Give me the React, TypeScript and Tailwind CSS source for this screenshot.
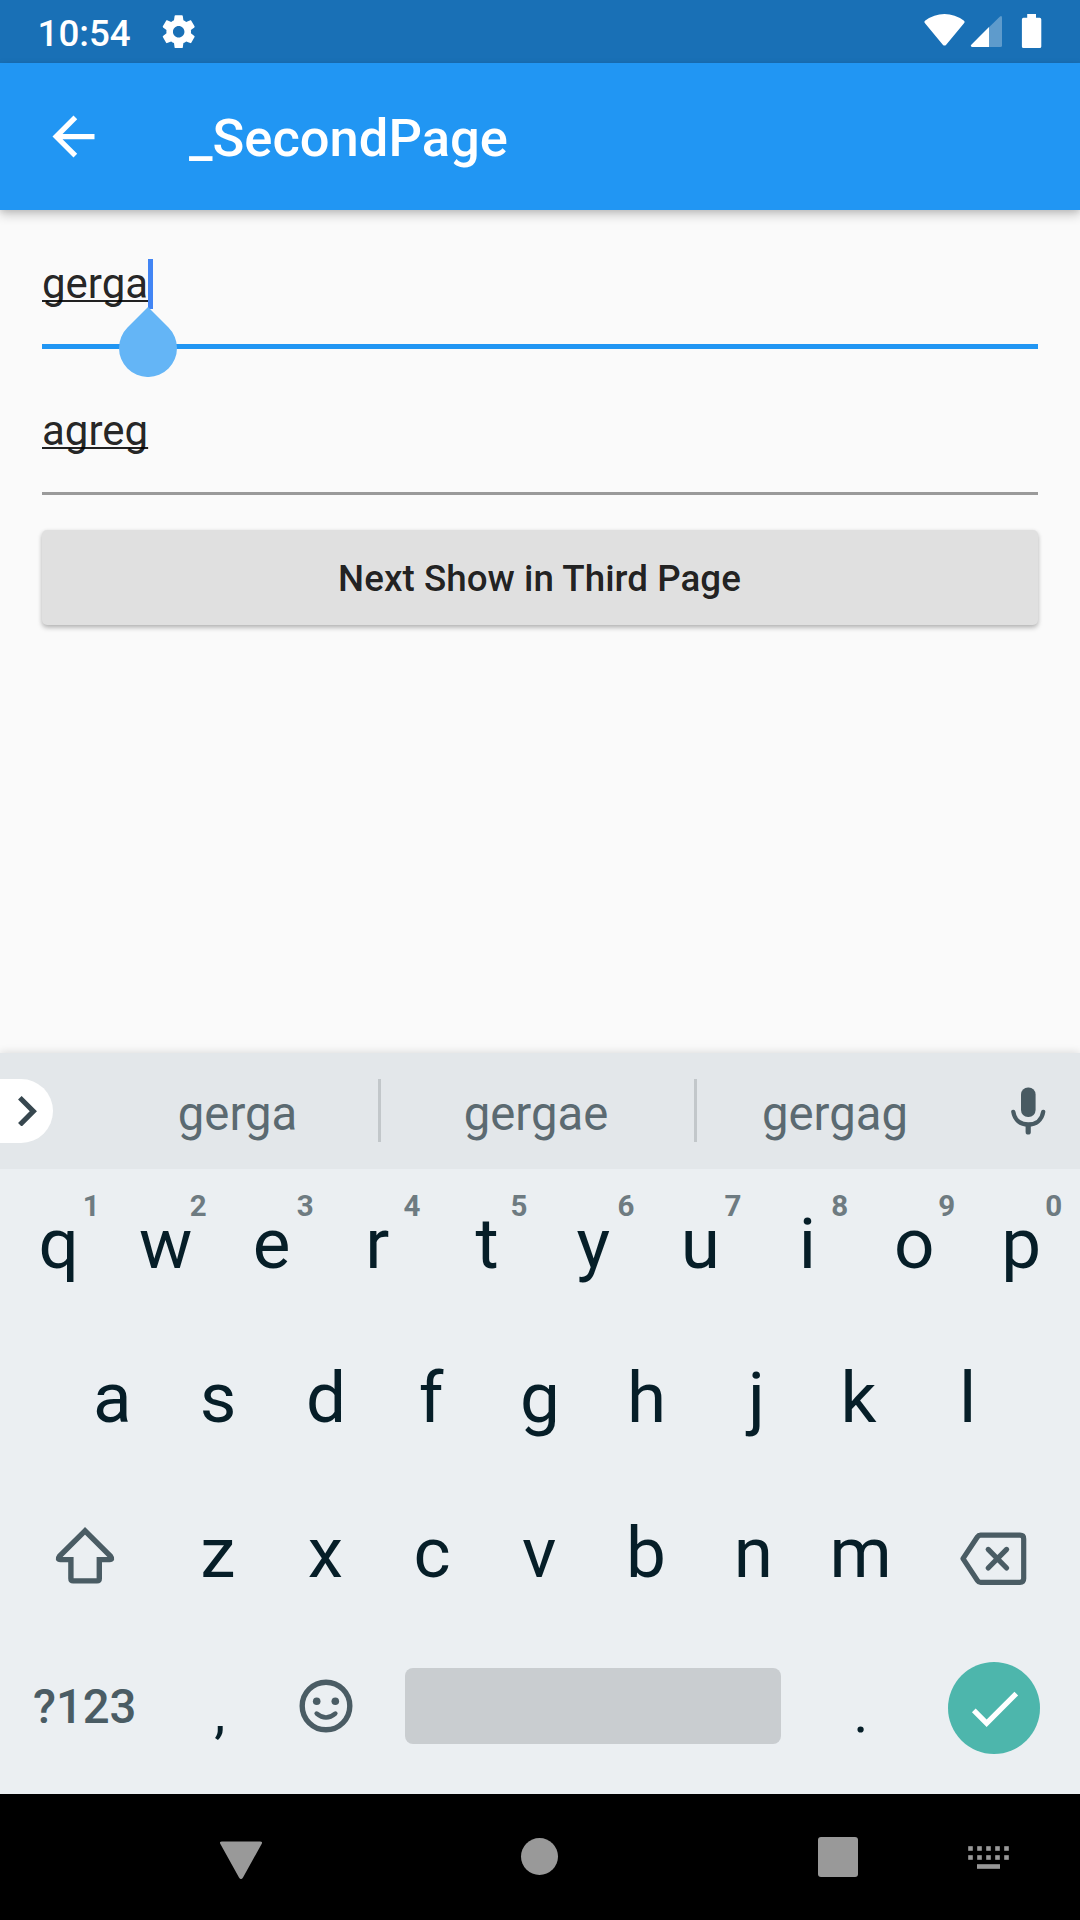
import React from "react";

const ROW_1 = ["q", "w", "e", "r", "t", "y", "u", "i", "o", "p"];
const HINTS = ["1", "2", "3", "4", "5", "6", "7", "8", "9", "0"];
const ROW_2 = ["a", "s", "d", "f", "g", "h", "j", "k", "l"];
const ROW_3 = ["z", "x", "c", "v", "b", "n", "m"];

// Optical centring for glyphs with uneven side bearings.
const OPTICAL: Record<string, string> = {
  e: "pr-[2px]",
  r: "pr-[4.5px]",
  t: "pl-[1.5px]",
  s: "pr-[2px]",
  f: "pr-[4px]",
  j: "pl-[5px]",
  k: "pr-[4.5px]",
  z: "pr-[2.5px]",
  x: "pr-[1.5px]",
  c: "pr-[2px]",
  v: "pr-[1.5px]",
  b: "pr-[2px]",
  h: "pr-[1px]",
  n: "pr-[1px]",
  ",": "pl-[1.5px]",
};

function Key({ label, hint }: { label: string; hint?: string }) {
  return (
    <div className="relative flex h-full w-[106.95px] items-center justify-center pb-[5px] text-[71px] leading-none text-[#061e28]">
      <span className={OPTICAL[label]}>{label}</span>
      {hint && (
        <span className="absolute top-[20px] right-[12.5px] text-[29.5px] leading-[35px] font-bold text-[#6e7b81]">
          {hint}
        </span>
      )}
    </div>
  );
}

function PunctuationKey({ label }: { label: string }) {
  return (
    <div className="flex w-[106.95px] items-center justify-center pt-[6px] text-[56px] leading-none text-[#061e28]">
      <span className={OPTICAL[label]}>{label}</span>
    </div>
  );
}

function StatusBar() {
  return (
    <div className="flex h-[63px] items-center bg-[#1970b6] pl-[37.5px] pr-[38px] text-white">
      <span className="pt-[5px] text-[36.75px] leading-none font-medium">10:54</span>
      <svg viewBox="0 0 24 24" className="ml-[28px] size-[39.4px]" fill="currentColor">
        <path d="M19.43 12.98c.04-.32.07-.64.07-.98s-.03-.66-.07-.98l2.11-1.65c.19-.15.24-.42.12-.64l-2-3.46c-.12-.22-.39-.3-.61-.22l-2.49 1c-.52-.4-1.08-.73-1.69-.98l-.38-2.65C14.46 2.18 14.25 2 14 2h-4c-.25 0-.46.18-.49.42l-.38 2.65c-.61.25-1.17.59-1.69.98l-2.49-1c-.23-.09-.49 0-.61.22l-2 3.46c-.13.22-.07.49.12.64l2.11 1.65c-.04.32-.07.65-.07.98s.03.66.07.98l-2.11 1.65c-.19.15-.24.42-.12.64l2 3.46c.12.22.39.3.61.22l2.49-1c.52.4 1.08.73 1.69.98l.38 2.65c.03.24.24.42.49.42h4c.25 0 .46-.18.49-.42l.38-2.65c.61-.25 1.17-.59 1.69-.98l2.49 1c.23.09.49 0 .61-.22l2-3.46c.12-.22.07-.49-.12-.64l-2.11-1.65zM12 15.5c-1.93 0-3.5-1.57-3.5-3.5s1.57-3.5 3.5-3.5 3.5 1.57 3.5 3.5-1.57 3.5-3.5 3.5z" />
      </svg>
      <svg viewBox="924 0 118 63" className="ml-auto h-[63px] w-[118px]" fill="currentColor">
        <path d="M925 23.2Q923.6 21.8 925.3 20.6Q934 14 944.5 14T963.7 20.6Q965.4 21.8 964 23.2L946.2 44.7Q944.5 46.4 942.8 44.7Z" />
        <path d="M1000 16.4Q1002 15.2 1002 17.6V45.5Q1002 47 1000.5 47H989V27.2Z" fillOpacity="0.3" />
        <path d="M989 27V47H972Q970 46.4 971.3 44.8Z" />
        <path d="M1027.2 14h8.8v3.8h3.7q1.6 0 1.6 1.6v27q0 1.5-1.6 1.5h-16.2q-1.6 0-1.6-1.5v-27q0-1.6 1.6-1.6h3.7z" />
      </svg>
    </div>
  );
}

function AppBar() {
  return (
    <div className="relative flex h-[147px] items-center bg-[#2196f3] pl-[42px] text-white shadow-[0_5px_10px_rgba(0,0,0,0.2),0_2px_5px_rgba(0,0,0,0.08)]">
      <svg viewBox="0 0 24 24" className="size-[63px]" fill="currentColor">
        <path d="M20 11H7.83l5.59-5.59L12 4l-8 8 8 8 1.41-1.41L7.83 13H20v-2z" />
      </svg>
      <h1 className="ml-[84px] pt-[4px] text-[52.5px] leading-none font-medium">_SecondPage</h1>
    </div>
  );
}

function Form() {
  return (
    <div className="flex h-[843px] flex-col bg-[#fafafa] px-[42px] text-[42px] text-black/87">
      <div className="relative flex h-[139px] items-end border-b-[5px] border-[#2196f3] pb-[35px]">
        <span className="pb-[1px] leading-[49px] underline decoration-[2px] underline-offset-[2px] [text-decoration-skip-ink:none]">
          gerga
        </span>
        <span className="h-[50px] w-[5px] bg-[#4285f4]" />
        <svg viewBox="0 0 58 70" className="absolute top-[97px] left-[77px] h-[70px] w-[58px]" fill="#64b5f6">
          <path d="M29 0L49.5 20.5A29 29 0 1 1 8.5 20.5Z" />
        </svg>
      </div>
      <div className="flex h-[146px] items-end border-b-[3px] border-[#9a9a9a] pb-[37px]">
        <span className="leading-[49px] underline decoration-[2px] underline-offset-[2px] [text-decoration-skip-ink:none]">
          agreg
        </span>
      </div>
      <button className="mt-[35px] h-[95px] rounded-[5px] bg-[#e0e0e0] pt-[4px] pr-[1px] text-[36.75px] leading-none font-medium tracking-[0.04px] shadow-[0_3px_5px_rgba(0,0,0,0.22),0_1px_4px_rgba(0,0,0,0.1)]">
        Next Show in Third Page
      </button>
    </div>
  );
}

function Suggestions() {
  return (
    <div className="flex h-[116px] bg-[#e3e7ea] pt-[26px] text-[47.25px] leading-[68px] text-[#5b6a71] shadow-[0_-1px_8px_rgba(0,0,0,0.12)]">
      <div className="flex h-[64px] w-[52.5px] items-center rounded-r-full bg-white">
        <svg viewBox="8.59 6 7.41 12" className="ml-[18px] h-[30.6px] w-[19px]" fill="#37474f">
          <path d="M10 6L8.59 7.41 13.17 12l-4.58 4.59L10 18l6-6z" />
        </svg>
      </div>
      <span className="ml-[44.5px] w-[281px] pt-[1px] text-center">gerga</span>
      <span className="h-[63px] w-[3px] bg-[#c2c7ca]" />
      <span className="w-[313px] pt-[1px] pr-[3px] text-center">gergae</span>
      <span className="h-[63px] w-[3px] bg-[#c2c7ca]" />
      <span className="w-[276px] pt-[1px] text-center">gergag</span>
      <svg viewBox="0 0 36 48" className="mt-[7.5px] ml-[37px] h-[48px] w-[36px]" fill="none" stroke="#485a62">
        <rect x="11" y="0.5" width="14.6" height="29.5" rx="7" fill="#485a62" stroke="none" />
        <path d="M3.3 24.8C4.5 33 10.5 37.5 18.2 37.5S32 33 33.2 24.8" strokeWidth="4.3" strokeLinecap="round" />
        <path d="M18.2 38.5V45" strokeWidth="5.2" strokeLinecap="round" />
      </svg>
    </div>
  );
}

function Keyboard() {
  return (
    <div className="relative flex h-[625px] flex-col bg-[#ebeff2] px-[5.25px]">
      <div className="flex h-[154px]">
        {ROW_1.map((k, i) => (
          <Key key={k} label={k} hint={HINTS[i]} />
        ))}
      </div>
      <div className="flex h-[154px] justify-center">
        {ROW_2.map((k) => (
          <Key key={k} label={k} />
        ))}
      </div>
      <div className="flex h-[155.5px]">
        <div className="flex w-[160.4px] items-center justify-center pt-[2px]">
          <svg viewBox="0 0 60 60" className="size-[60px]" fill="none" stroke="#4a5c64" strokeWidth="5.4">
            <path d="M30 4.9L4.4 30.4Q2 33.6 5.4 33.6H15.9V52.6Q15.9 54.9 18.2 54.9H42Q44.3 54.9 44.3 52.6V33.6H54.6Q58 33.6 55.6 30.4Z" />
          </svg>
        </div>
        {ROW_3.map((k) => (
          <Key key={k} label={k} />
        ))}
        <div className="flex w-[160.4px] items-center justify-center pt-[7px]">
          <svg viewBox="0 0 72 57" className="h-[57px] w-[72px]" fill="none" stroke="#4a5c64" strokeWidth="5.2" strokeLinejoin="round" strokeLinecap="round">
            <path d="M5 28.6L19.5 6.8Q20.5 5.2 22.5 5.2H62Q65.7 5.2 65.7 8.9V48.6Q65.7 52.3 62 52.3H22.5Q20.5 52.3 19.5 50.7Z" />
            <path d="M30.2 19.4L48.6 38M48.6 19.4L30.2 38" />
          </svg>
        </div>
      </div>
      <div className="flex h-[154.5px]">
        <div className="flex w-[160.4px] items-center justify-center pr-[1.5px] pb-[5px] text-[47.25px] font-medium text-[#4a5c64]">
          ?123
        </div>
        <PunctuationKey label="," />
        <div className="flex w-[106.95px] items-center justify-center pr-[1px] pb-[8px]">
          <svg viewBox="0 0 54 54" className="size-[54px]" fill="none" stroke="#4a5c64">
            <circle cx="27" cy="27" r="23.8" strokeWidth="5.4" />
            <circle cx="17.7" cy="22.2" r="3.8" fill="#4a5c64" stroke="none" />
            <circle cx="36.3" cy="22.2" r="3.8" fill="#4a5c64" stroke="none" />
            <path d="M17.6 34.5Q27 42.5 36.4 34.5" strokeWidth="4.4" strokeLinecap="round" />
          </svg>
        </div>
        <div className="flex w-[427.8px] items-center justify-center pb-[7px]">
          <div className="h-[76px] w-[376px] rounded-[8px] bg-[#c9cdd0]" />
        </div>
        <PunctuationKey label="." />
        <div className="flex w-[160.4px] items-center justify-center pb-[3px]">
          <div className="flex size-[92px] items-center justify-center rounded-full bg-[#4db6ac]">
            <svg viewBox="0 0 24 24" className="size-[63px]" fill="white">
              <path d="M9 16.17L4.83 12l-1.42 1.41L9 19 21 7l-1.41-1.41z" />
            </svg>
          </div>
        </div>
      </div>
    </div>
  );
}

function NavBar() {
  return (
    <div className="flex h-[126px] items-center bg-black">
      <svg viewBox="0 0 42 38" className="ml-[220px] mt-[5px] h-[38px] w-[42px]" fill="#999999">
        <path d="M2 0.5H40Q43 0.5 41.6 3L23 36.5Q21 39.5 19 36.5L0.4 3Q-1 0.5 2 0.5Z" />
      </svg>
      <div className="mb-px ml-[259px] size-[37px] rounded-full bg-[#999999]" />
      <div className="ml-[260px] size-[40px] rounded-[3px] bg-[#999999]" />
      <svg viewBox="0 0 41 23" className="ml-[110px] mt-px h-[23px] w-[41px]" fill="#999999">
        {[0, 9, 18, 27, 36].map((x) => (
          <React.Fragment key={x}>
            <rect x={x + 0.2} y="0.2" width="4.6" height="4.6" />
            <rect x={x + 0.2} y="9.2" width="4.6" height="4.6" />
          </React.Fragment>
        ))}
        <rect x="9" y="18.2" width="23" height="4.6" />
      </svg>
    </div>
  );
}

export default function App() {
  return (
    <div className="flex h-[1920px] w-[1080px] flex-col overflow-hidden bg-[#fafafa] font-[Roboto,sans-serif]">
      <StatusBar />
      <AppBar />
      <Form />
      <Suggestions />
      <Keyboard />
      <NavBar />
    </div>
  );
}
